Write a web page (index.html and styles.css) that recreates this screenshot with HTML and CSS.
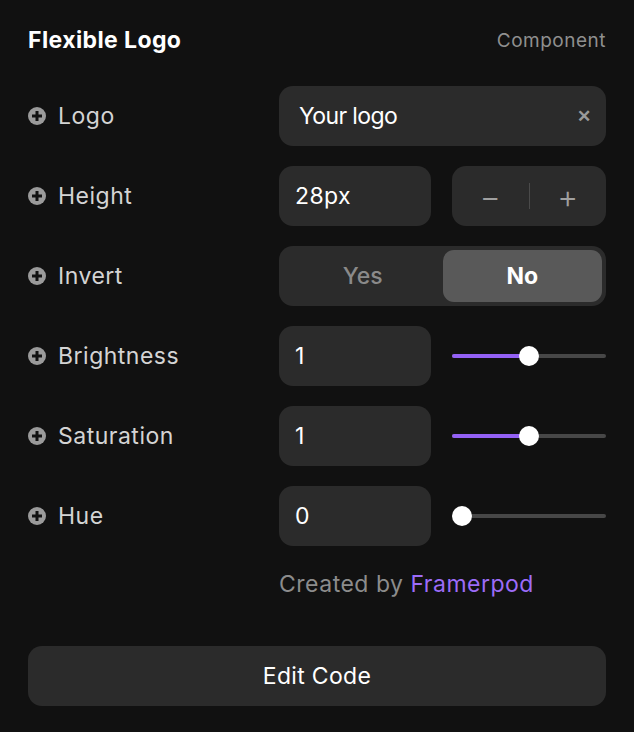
FILE: index.html
```html
<!DOCTYPE html>
<html lang="en">
<head>
  <meta charset="UTF-8" />
  <title>Flexible Logo</title>
  <link rel="stylesheet" href="styles.css">
</head>
<body>

<div class="panel">
  <header class="panel-head">
    <h1>Flexible Logo</h1>
    <span class="kind">Component</span>
  </header>

  <div class="row">
    <div class="label"><span class="plus"></span>Logo</div>
    <div class="field text-field">
      <span>Your logo</span>
      <span class="clear">&#x2715;</span>
    </div>
  </div>

  <div class="row">
    <div class="label"><span class="plus"></span>Height</div>
    <div class="pair">
      <div class="field">28px</div>
      <div class="stepper">
        <span>&minus;</span>
        <i class="divider"></i>
        <span>+</span>
      </div>
    </div>
  </div>

  <div class="row">
    <div class="label"><span class="plus"></span>Invert</div>
    <div class="segment">
      <span>Yes</span>
      <span class="on">No</span>
    </div>
  </div>

  <div class="row">
    <div class="label"><span class="plus"></span>Brightness</div>
    <div class="pair">
      <div class="field">1</div>
      <div class="slider"><div class="fill" style="width: 50%"></div><div class="thumb" style="left: calc(50% - 10px)"></div></div>
    </div>
  </div>

  <div class="row">
    <div class="label"><span class="plus"></span>Saturation</div>
    <div class="pair">
      <div class="field">1</div>
      <div class="slider"><div class="fill" style="width: 50%"></div><div class="thumb" style="left: calc(50% - 10px)"></div></div>
    </div>
  </div>

  <div class="row">
    <div class="label"><span class="plus"></span>Hue</div>
    <div class="pair">
      <div class="field">0</div>
      <div class="slider"><div class="fill" style="width: 0%"></div><div class="thumb" style="left: 0"></div></div>
    </div>
  </div>

  <div class="row credit-row">
    <div></div>
    <p class="credit">Created by <a href="#">Framerpod</a></p>
  </div>

  <button class="edit">Edit Code</button>
</div>

</body>
</html>
```

FILE: styles.css
```css
body {
  margin: 0;
  background: #111111;
  font-family: Inter, "Noto Sans", sans-serif;
  color: #e6e6e6;
}
.panel {
  padding: 24px 28px 26px;
}
.panel-head {
  display: flex;
  justify-content: space-between;
  align-items: center;
  height: 32px;
  margin-bottom: 30px;
}
.panel-head h1 {
  margin: 0;
  font-size: 23px;
  font-weight: 700;
  color: #ffffff;
  letter-spacing: 0.4px;
}
.kind {
  font-size: 19px;
  color: #8f8f8f;
  letter-spacing: 0.5px;
}
.row {
  display: grid;
  grid-template-columns: 251px 1fr;
  align-items: center;
  margin-bottom: 20px;
}
.label {
  display: flex;
  align-items: center;
  gap: 12px;
  font-size: 23px;
  letter-spacing: 0.5px;
  color: #d4d4d4;
}
.plus {
  position: relative;
  width: 18px;
  height: 18px;
  border-radius: 50%;
  background: #9a9a9a;
}
.plus::before, .plus::after {
  content: "";
  position: absolute;
  left: 50%;
  top: 50%;
  background: #111111;
  transform: translate(-50%, -50%);
}
.plus::before { width: 10px; height: 3px; }
.plus::after { width: 3px; height: 10px; }
.field {
  display: flex;
  align-items: center;
  height: 60px;
  padding: 0 16px;
  border-radius: 14px;
  background: #2b2b2b;
  font-size: 23px;
  letter-spacing: 0.4px;
  color: #ffffff;
}
.text-field {
  justify-content: space-between;
  padding: 0 16px 0 20px;
  letter-spacing: -0.6px;
}
.clear {
  font-size: 17px;
  font-weight: 700;
  color: #9a9a9a;
}
.pair {
  display: grid;
  grid-template-columns: 152px 1fr;
  gap: 21px;
  align-items: center;
}
.stepper {
  display: grid;
  grid-template-columns: 1fr auto 1fr;
  align-items: center;
  justify-items: center;
  height: 60px;
  border-radius: 14px;
  background: #2b2b2b;
  font-size: 32px;
  font-weight: 300;
  color: #a0a0a0;
}
.divider {
  width: 1px;
  height: 26px;
  background: #4a4a4a;
}
.segment {
  display: grid;
  grid-template-columns: 1fr 1fr;
  height: 60px;
  padding: 4px;
  box-sizing: border-box;
  border-radius: 14px;
  background: #2b2b2b;
  font-size: 23px;
  font-weight: 500;
}
.segment span {
  display: flex;
  align-items: center;
  justify-content: center;
  border-radius: 11px;
  color: #8a8a8a;
}
.segment .on {
  background: #595959;
  color: #ffffff;
  font-weight: 700;
}
.slider {
  position: relative;
  height: 4px;
  border-radius: 2px;
  background: #474747;
}
.fill {
  height: 4px;
  border-radius: 2px;
  background: #9461f5;
}
.thumb {
  position: absolute;
  top: 50%;
  width: 20px;
  height: 20px;
  border-radius: 50%;
  background: #ffffff;
  transform: translateY(-50%);
}
.credit-row {
  margin: 24px 0 48px;
}
.credit {
  margin: 0;
  font-size: 23px;
  letter-spacing: 0.5px;
  color: #8c8c8c;
}
.credit a {
  color: #9c6cf8;
  text-decoration: none;
}
.edit {
  display: block;
  width: 100%;
  height: 60px;
  border: none;
  border-radius: 14px;
  background: #2b2b2b;
  font-family: inherit;
  font-size: 23px;
  letter-spacing: 0.3px;
  color: #ffffff;
}
```
